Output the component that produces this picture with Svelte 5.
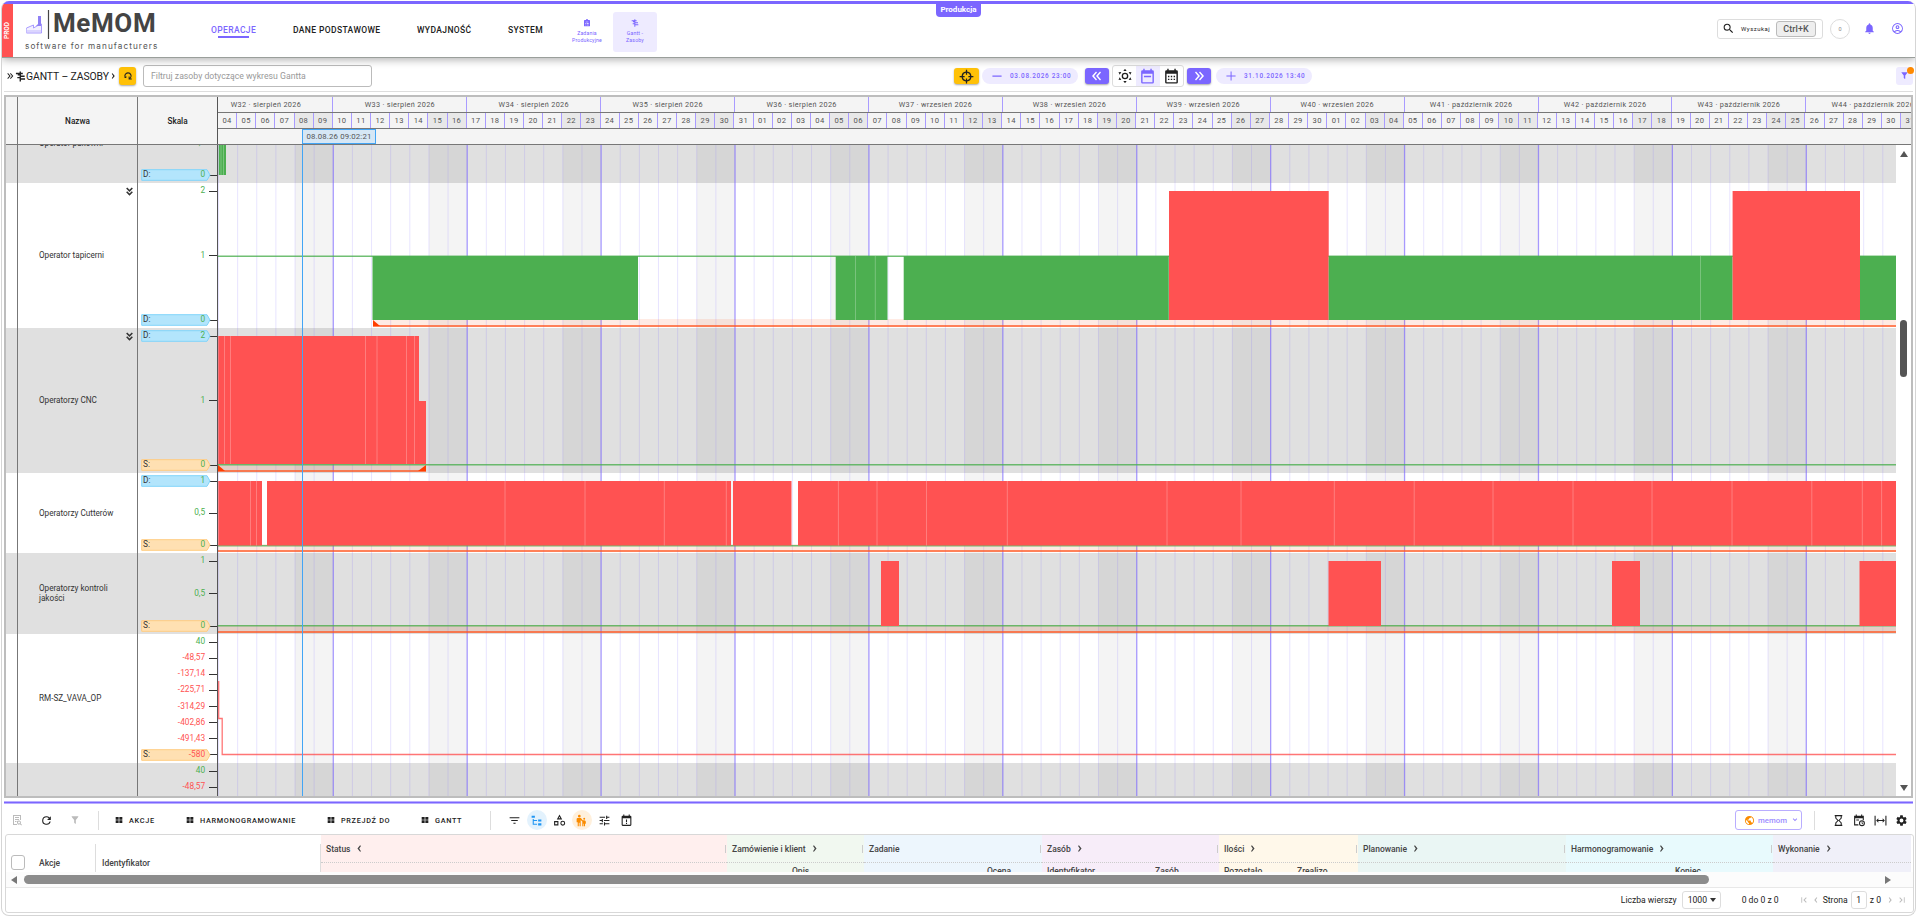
<script>
  const DAY = 19.13;
  const FIRST = 218.5;
  const LEFT = 218;
  const CHART_WIDTH = 1678;

  const icons = {
    search: 'M15.5 14h-.79l-.28-.27A6.471 6.471 0 0 0 16 9.5 6.5 6.5 0 1 0 9.5 16c1.61 0 3.09-.59 4.23-1.57l.27.28v.79l5 4.99L20.49 19l-4.99-5zm-6 0C7.01 14 5 11.99 5 9.5S7.01 5 9.5 5 14 7.01 14 9.5 11.99 14 9.5 14z',
    bell: 'M12 22c1.1 0 2-.9 2-2h-4c0 1.1.9 2 2 2zm6-6v-5c0-3.07-1.63-5.64-4.5-6.32V4c0-.83-.67-1.5-1.5-1.5s-1.5.67-1.5 1.5v.68C7.64 5.36 6 7.92 6 11v5l-2 2v1h16v-1l-2-2z',
    account: 'M12 2a10 10 0 1 0 0 20 10 10 0 0 0 0-20zM7.35 18.5a8 8 0 0 1 9.3 0 8 8 0 0 1-9.3 0zm10.79-1.38a10 10 0 0 0-12.28 0 8 8 0 1 1 12.28 0zM12 6a3.5 3.5 0 1 0 0 7 3.5 3.5 0 0 0 0-7zm0 5a1.5 1.5 0 1 1 0-3 1.5 1.5 0 0 1 0 3z',
    task: 'M19 3h-4a3 3 0 0 0-6 0H5a2 2 0 0 0-2 2v15a2 2 0 0 0 2 2h14a2 2 0 0 0 2-2V5a2 2 0 0 0-2-2zM8 8h8v2H8zM7 13h3v2H7zM12 13h5v2h-5zM7 17h3v2H7zM12 17h5v2h-5z',
    gantt: 'M10 1h3v3h4v3h-4v3h8v3h-8v3h9v3h-9v4h-3v-7H5v-3h5v-3H6V7H2V4h8z',
    target: 'M11 1h2v3.1A8 8 0 0 1 19.9 11H23v2h-3.1A8 8 0 0 1 13 19.9V23h-2v-3.1A8 8 0 0 1 4.1 13H1v-2h3.1A8 8 0 0 1 11 4.1zM13 6.1V9h-2V6.1A6 6 0 0 0 6.1 11H9v2H6.1a6 6 0 0 0 4.9 4.9V15h2v2.9a6 6 0 0 0 4.9-4.9H15v-2h2.9A6 6 0 0 0 13 6.1z',
    reset: 'M12 3a8.500 8.500 0 0 1 5.500 15H21v2.400h-7.500V13h2.400v3.500A6 6 0 1 0 6.200 13.500L8 12v5H2.500l1.700-1.700A8.500 8.500 0 0 1 12 3z',
    sun: 'M12 7a5 5 0 1 0 0 10 5 5 0 0 0 0-10zm0 2a3 3 0 1 1 0 6 3 3 0 0 1 0-6zM12 1l2.5 3.5h-5zM12 23l2.5-3.5h-5zM2.2 6.5l4.3-.4-2.4 4zM21.8 6.5l-4.3-.4 2.4 4zM2.2 17.5l4.3.4-2.4-4zM21.8 17.5l-4.3.4 2.4-4z',
    week: 'M6 1h2v2h8V1h2v2h1a2 2 0 0 1 2 2v15a2 2 0 0 1-2 2H5a2 2 0 0 1-2-2V5a2 2 0 0 1 2-2h1zM5 8v12h14V8zM7 11h10v2H7z',
    month: 'M6 1h2v2h8V1h2v2h1a2 2 0 0 1 2 2v15a2 2 0 0 1-2 2H5a2 2 0 0 1-2-2V5a2 2 0 0 1 2-2h1zM5 8v12h14V8zM7 11h2v2H7zM11 11h2v2h-2zM15 11h2v2h-2zM7 15h2v2H7zM11 15h2v2h-2zM15 15h2v2h-2z',
    filter: 'M14 12v7.88c.04.3-.06.62-.29.83a1 1 0 0 1-1.41 0l-2.01-2.01a.99.99 0 0 1-.29-.83V12L4.21 4.62a1 1 0 0 1 .17-1.4c.19-.14.4-.22.62-.22h14c.22 0 .43.08.62.22a1 1 0 0 1 .17 1.4L14 12z',
    preview: 'M4 2h14v2H6v16h6v2H4zM18 2h2v10h-2zM8 6h8v2H8zM8 10h8v2H8zM8 14h3v2H8zM16 13a4 4 0 1 0 1.9 7.5l2.6 2.5 1.4-1.4-2.5-2.6A4 4 0 0 0 16 13zm0 2a2 2 0 1 1 0 4 2 2 0 0 1 0-4z',
    refresh: 'M17.65 6.35A7.95 7.95 0 0 0 12 4a8 8 0 1 0 7.73 10h-2.08A6 6 0 1 1 12 6c1.66 0 3.14.69 4.22 1.78L13 11h7V4l-2.35 2.35z',
    grid: 'M2 3h9v8H2zM13 3h9v8h-9zM2 13h9v8H2zM13 13h9v8h-9z',
    lines: 'M10 18h4v-2h-4v2zM3 6v2h18V6H3zm3 7h12v-2H6v2z',
    tree: 'M3 3h6v4H3V3zm12 7h6v4h-6v-4zm0 7h6v4h-6v-4zm-2-4H7v5h6v2H5V9h2v2h6v2z',
    shapes: 'M12 1l5 9H7zM12 5l-1.6 3h3.2zM2 13h8v8H2zM4 15v4h4v-4zM18 12.5a4.5 4.5 0 1 0 0 9 4.5 4.5 0 0 0 0-9zm0 2a2.5 2.5 0 1 1 0 5 2.5 2.5 0 0 1 0-5z',
    people: 'M8 1.5a2.5 2.5 0 1 1 0 5 2.5 2.5 0 0 1 0-5zM5 7.5h6l3 4h3a3 3 0 0 1 3 3V18h-1.5v4.5h-2V18h-1v4.5h-2V14l-3-3v11.5H8.5V16H7v6.5H5V15H3V9.5a2 2 0 0 1 2-2zM17 7a1.8 1.8 0 1 1 0 3.6 1.8 1.8 0 0 1 0-3.6z',
    tune: 'M3 17v2h6v-2H3zM3 5v2h10V5H3zm10 16v-2h8v-2h-8v-2h-2v6h2zM7 9v2H3v2h4v2h2V9H7zm14 4v-2H11v2h10zm-6-4h2V7h4V5h-4V3h-2v6z',
    alert: 'M6 1h2v2h8V1h2v2h1a2 2 0 0 1 2 2v15a2 2 0 0 1-2 2H5a2 2 0 0 1-2-2V5a2 2 0 0 1 2-2h1zM5 8v12h14V8zM11 10h2v5h-2zM11 16.5h2v2h-2z',
    globe: 'M12 2a10 10 0 1 0 0 20 10 10 0 0 0 0-20zm-1 17.93A7.99 7.99 0 0 1 4 12c0-.62.08-1.21.21-1.79L9 15v1c0 1.1.9 2 2 2v1.93zm6.9-2.54A2 2 0 0 0 16 16h-1v-3c0-.55-.45-1-1-1H8v-2h2c.55 0 1-.45 1-1V7h2c1.1 0 2-.9 2-2v-.41a7.98 7.98 0 0 1 2.9 12.8z',
    hourglass: 'M5 2v2h1v4l4 4-4 4v4H5v2h14v-2h-1v-4l-4-4 4-4V4h1V2H5zm11 14.5V20H8v-3.5l4-4 4 4zm-4-5l-4-4V4h8v3.5l-4 4z',
    schedule: 'M5 1h2v2h8V1h2v2h3v8h-2V8H4v11h6v2H2V3h3zM6 10h5v2H6zM16.5 11.5a5.5 5.5 0 1 0 0 11 5.5 5.5 0 0 0 0-11zm0 2a3.5 3.5 0 1 1 0 7 3.5 3.5 0 0 1 0-7zM16 14h1.4v2.8l1.6 1-.7 1.2-2.3-1.5z',
    fit: 'M1 3h2v18H1zM21 3h2v18h-2zM8 8v3h8V8l4 4-4 4v-3H8v3l-4-4z',
    gear: 'M19.14 12.94c.04-.3.06-.61.06-.94 0-.32-.02-.64-.07-.94l2.03-1.58a.49.49 0 0 0 .12-.61l-1.92-3.32a.488.488 0 0 0-.59-.22l-2.39.96c-.5-.38-1.03-.7-1.62-.94l-.36-2.54a.484.484 0 0 0-.48-.41h-3.84c-.24 0-.43.17-.47.41l-.36 2.54c-.59.24-1.13.57-1.62.94l-2.39-.96c-.22-.08-.47 0-.59.22L2.74 8.87c-.12.21-.08.47.12.61l2.03 1.58c-.05.3-.09.63-.09.94s.02.64.07.94l-2.03 1.58a.49.49 0 0 0-.12.61l1.92 3.32c.12.22.37.29.59.22l2.39-.96c.5.38 1.03.7 1.62.94l.36 2.54c.05.24.24.41.48.41h3.84c.24 0 .44-.17.47-.41l.36-2.54c.59-.24 1.13-.56 1.62-.94l2.39.96c.22.08.47 0 .59-.22l1.92-3.32c.12-.22.07-.47-.12-.61l-2.01-1.58zM12 15.6a3.6 3.6 0 1 1 0-7.2 3.6 3.6 0 0 1 0 7.2z',
    right: 'M7 3l3-2 9 11-9 11-3-2 6-9z',
    left: 'M17 3l-3-2-9 11 9 11 3-2-6-9z',
    doubleRight: 'M4 5l2-2 8 9-8 9-2-2 6-7zM12 5l2-2 8 9-8 9-2-2 6-7z',
    doubleLeft: 'M20 5l-2-2-8 9 8 9 2-2-6-7zM12 5l-2-2-8 9 8 9 2-2-6-7z',
    doubleDown: 'M3 4l3-3 6 6 6-6 3 3-9 9zM3 14l3-3 6 6 6-6 3 3-9 9z',
    minus: 'M1 11h22v2.5H1z',
    plus: 'M1 11h10V1h2.4v10H23v2.4h-9.6V23H11v-9.6H1z',
    down: 'M3 8l3-3 6 6 6-6 3 3-9 9z',
    first: 'M4 4h2.5v16H4zM18 4l2 2-6 6 6 6-2 2-8-8z',
    last: 'M20 4h-2.5v16H20zM6 4L4 6l6 6-6 6 2 2 8-8z'
  };

  const menu = [
    { label: 'OPERACJE', width: 44, active: true },
    { label: 'DANE PODSTAWOWE', width: 86 },
    { label: 'WYDAJNOŚĆ', width: 53 },
    { label: 'SYSTEM', width: 34 }
  ];

  const days = Array.from({ length: 89 }, (_, i) => {
    const date = new Date(Date.UTC(2026, 7, 4 + i));
    return {
      label: String(date.getUTCDate()).padStart(2, '0'),
      x: FIRST - LEFT + i * DAY,
      weekend: date.getUTCDay() === 0 || date.getUTCDay() === 6,
      monday: date.getUTCDay() === 1
    };
  });

  const weeks = Array.from({ length: 13 }, (_, i) => ({
    name: `W${32 + i}`,
    month: i < 5 ? 'sierpień' : i < 9 ? 'wrzesień' : 'październik'
  }));

  // x values of bars are measured from the left edge of the page
  const rows = [
    {
      name: 'Operator pakowni', height: 80, dark: true,
      ticks: ['1', '0,5', '0'], tags: { 2: 'D' },
      bars: [{ x: 218.8, to: 226, y: 8, color: 'green' }],
      splits: [221, 223.5], base: 72
    },
    {
      name: 'Operator tapicerni', height: 145, expand: true,
      ticks: ['2', '1', '0'], tags: { 2: 'D' },
      bars: [
        { x: 372.5, to: 638, y: 73, color: 'green' },
        { x: 835.7, to: 887.5, y: 73, color: 'green' },
        { x: 903.7, to: 1168.8, y: 73, color: 'green' },
        { x: 1169, to: 1328.7, y: 8, color: 'red' },
        { x: 1328.7, to: 1732.6, y: 73, color: 'green' },
        { x: 1732.6, to: 1860, y: 8, color: 'red' },
        { x: 1860, to: 1896, y: 73, color: 'green' }
      ],
      splits: [855.5, 875.3, 1700.5], splitY: 73, base: 137,
      green: 72.5, band: [373, 1896], start: true
    },
    {
      name: 'Operatorzy CNC', height: 145, dark: true, expand: true,
      ticks: ['2', '1', '0'], tags: { 0: 'D', 2: 'S' },
      bars: [
        { x: 218.3, to: 419, y: 8, color: 'red' },
        { x: 418.8, to: 426, y: 73, color: 'red' }
      ],
      splits: [224.5, 230.5, 365.5, 377, 406.5, 414.5], base: 136,
      green: 136, band: [218, 426], start: true, end: true
    },
    {
      name: 'Operatorzy Cutterów', height: 80,
      ticks: ['1', '0,5', '0'], tags: { 0: 'D', 2: 'S' },
      bars: [
        { x: 218.3, to: 262, y: 8, color: 'red' },
        { x: 267, to: 731, y: 8, color: 'red' },
        { x: 733, to: 791.5, y: 8, color: 'red' },
        { x: 798, to: 1896, y: 8, color: 'red' }
      ],
      splits: [250.5, 256.5, 505, 585, 664.3, 726.3, 838.4, 877, 926.5, 1007.3, 1167, 1241, 1334.3, 1414.2, 1493, 1573, 1652, 1732, 1811.8, 1862.3, 1881.6],
      base: 72.5, green: 72, band: [218, 1896]
    },
    {
      name: 'Operatorzy kontroli jakości', height: 81, dark: true,
      ticks: ['1', '0,5', '0'], tags: { 2: 'S' },
      bars: [
        { x: 881, to: 899, y: 8, color: 'red' },
        { x: 1328.5, to: 1381, y: 8, color: 'red' },
        { x: 1612, to: 1640, y: 8, color: 'red' },
        { x: 1859.5, to: 1896, y: 8, color: 'red' }
      ],
      splits: [], base: 73, green: 72, band: [218, 1896]
    },
    {
      name: 'RM-SZ_VAVA_OP', height: 129,
      ticks: ['40', '-48,57', '-137,14', '-225,71', '-314,29', '-402,86', '-491,43', '-580'],
      tags: { 7: 'S' }, bars: [], splits: [], step: true
    },
    {
      name: '', height: 129, dark: true,
      ticks: ['40', '-48,57'],
      tags: {}, bars: [], splits: []
    }
  ];

  const actions = [
    { label: 'AKCJE', width: 71 },
    { label: 'HARMONOGRAMOWANIE', width: 141 },
    { label: 'PRZEJDŹ DO', width: 94 },
    { label: 'GANTT', width: 76 }
  ];

  const groups = [
    { label: 'Status', width: 406, color: 'rose', arrow: 'left', cols: [] },
    { label: 'Zamówienie i klient', width: 137, color: 'mint', arrow: 'right', cols: [{ label: 'Opis', pad: 65 }] },
    { label: 'Zadanie', width: 178, color: 'sky', cols: [{ label: 'Ocena', pad: 123 }] },
    { label: 'Zasób', width: 177, color: 'lilac', arrow: 'right', cols: [{ label: 'Identyfikator', pad: 5, width: 109 }, { label: 'Zasób', pad: 4 }] },
    { label: 'Ilości', width: 139, color: 'cream', arrow: 'right', cols: [{ label: 'Pozostało', pad: 5, width: 74 }, { label: 'Zrealizo', pad: 4 }] },
    { label: 'Planowanie', width: 208, color: 'sea', arrow: 'right', cols: [] },
    { label: 'Harmonogramowanie', width: 207, color: 'cyan', arrow: 'right', cols: [{ label: 'Koniec', pad: 109 }] },
    { label: 'Wykonanie', width: 138, color: 'violet', arrow: 'right', cols: [] }
  ];
</script>

{#snippet icon(name, size)}
  <svg class="icon" viewBox="0 0 24 24" width={size} height={size}>
    <path d={icons[name]} fill="currentColor" fill-rule="evenodd" />
  </svg>
{/snippet}

<div class="app">
  <header>
    <div class="env">PROD</div>
    <div class="logo">
      <div class="logo-top">
        <svg width="26" height="38" viewBox="0 0 26 38">
          <path d="M1.500 26V21l7-3v3l7-4h1v9z" fill="#f3f0ff" stroke="#a99bff" stroke-width="1" />
          <path d="M11 19l2-2V9h3v10z" fill="#8f80f5" />
          <path d="M1.500 26v-4.500M1.500 24h15" stroke="#c3baff" />
          <path d="M23.500 3v29" stroke="#444" stroke-width="1.200" />
        </svg>
        <span>MeMOM</span>
      </div>
      <div class="slogan">software for manufacturers</div>
    </div>
    <nav>
      {#each menu as item}
        <a class:active={item.active} style="width: {item.width}px">{item.label}</a>
      {/each}
    </nav>
    <div class="shortcuts">
      <div class="shortcut">{@render icon('task', 8)}<span>Zadania<br />Produkcyjne</span></div>
      <div class="shortcut selected">{@render icon('gantt', 8)}<span>Gantt -<br />Zasoby</span></div>
    </div>
    <div class="user-bar">
      <div class="search">
        {@render icon('search', 13)}
        <span>Wyszukaj</span>
        <kbd>Ctrl+K</kbd>
      </div>
      <div class="counter">0</div>
      {@render icon('bell', 13)}
      {@render icon('account', 13)}
    </div>
    <div class="mode">Produkcja</div>
  </header>

  <section class="toolbar">
    <div class="crumbs">
      {@render icon('doubleRight', 8)}
      {@render icon('gantt', 11)}
      <span class="title">GANTT – ZASOBY</span>
      {@render icon('right', 6)}
      <button class="reset">{@render icon('reset', 10)}</button>
      <input placeholder="Filtruj zasoby dotyczące wykresu Gantta" />
    </div>
    <div class="range">
      <button class="target">{@render icon('target', 15)}</button>
      <span class="pill">{@render icon('minus', 10)}<b>03.08.2026 23:00</b></span>
      <button class="move">{@render icon('doubleLeft', 12)}</button>
      <div class="switch">
        <span>{@render icon('sun', 16)}</span>
        <span class="on">{@render icon('week', 17)}</span>
        <span>{@render icon('month', 17)}</span>
      </div>
      <button class="move">{@render icon('doubleRight', 12)}</button>
      <span class="pill last">{@render icon('plus', 10)}<b>31.10.2026 13:40</b></span>
    </div>
    <div class="filter">{@render icon('filter', 9)}<i></i></div>
  </section>

  <section class="gantt">
    <div class="gantt-head">
      <div class="head-gap"></div>
      <div class="head-name">Nazwa</div>
      <div class="head-scale">Skala</div>
      <div class="head-time">
        <div class="weeks">
          {#each weeks as week}
            <span>{week.name} · {week.month} 2026</span>
          {/each}
        </div>
        <div class="days">
          {#each days as day}
            <span class:weekend={day.weekend}>{day.label}</span>
          {/each}
        </div>
        <div class="marker"><span>08.08.26 09:02:21</span></div>
      </div>
    </div>

    <div class="gantt-body">
      <div class="rows">
        {#each rows as row}
          <div class="row" class:dark={row.dark} style="height: {row.height}px">
            <div class="cell-gap"></div>
            <div class="cell-name">
              <span>{row.name}</span>
              {#if row.expand}<i>{@render icon('doubleDown', 9)}</i>{/if}
            </div>
            <div class="cell-scale" class:partial={row.ticks.length === 2}>
              {#each row.ticks as tick, i}
                <div class="tick" class:negative={tick.startsWith('-')}>
                  <div class="tag {row.tags[i] ?? ''}">
                    {#if row.tags[i]}
                      <svg width="70" height="12" viewBox="0 0 70 12">
                        <path d="M.7 .7H66L69 6l-3 5.300H.7z" />
                      </svg>
                    {/if}
                    <b>{row.tags[i] ? `${row.tags[i]}:` : ''}</b>
                    <span>{tick}</span>
                  </div>
                  <em></em>
                </div>
              {/each}
            </div>
            <svg class="chart" width={CHART_WIDTH} height={row.height} viewBox="{LEFT} 0 {CHART_WIDTH} {row.height}">
              {#each days as day}
                {#if day.weekend}
                  <rect x={day.x + LEFT} y="0" width={DAY} height={row.height} fill="#000" opacity="0.045" />
                {/if}
              {/each}
              {#each days as day}
                <line x1={day.x + LEFT} x2={day.x + LEFT} y1="0" y2={row.height} class={day.monday ? 'week-line' : 'day-line'} />
              {/each}
              {#if row.band}
                <rect x={row.band[0]} y={row.height - 9} width={row.band[1] - row.band[0]} height="6" fill="#ff5722" opacity="0.12" />
                <rect x={row.band[0]} y={row.height - 3} width={row.band[1] - row.band[0]} height="2" fill="#ff5722" opacity="0.75" />
              {/if}
              {#if row.green}
                <rect x={LEFT} y={row.green} width={CHART_WIDTH} height="1.500" fill="#4caf50" opacity="0.800" />
              {/if}
              {#each row.bars as bar}
                <rect x={bar.x} y={bar.y} width={bar.to - bar.x} height={row.base - bar.y} class={bar.color} />
              {/each}
              {#each row.splits as x}
                <line x1={x} x2={x} y1={row.splitY ?? 8} y2={row.base} stroke="#fff" stroke-width="1" opacity="0.250" />
              {/each}
              {#if row.start}
                <path d="M{row.band[0]} {row.height - 8}v6h7z" fill="#ff3d00" />
              {/if}
              {#if row.end}
                <path d="M{row.band[1]} {row.height - 8}v6h-8z" fill="#ff3d00" />
              {/if}
              {#if row.step}
                <path d="M218.700 47V84.500H222.200V120.500H1896" fill="none" stroke="#ff5252" stroke-width="1.300" opacity="0.800" />
              {/if}
            </svg>
          </div>
        {/each}
      </div>
      <div class="scroll-y">
        <svg width="8" height="6"><path d="M0 6L4 0l4 6z" fill="#555" /></svg>
        <i></i>
        <svg width="8" height="6"><path d="M0 0L4 6l4-6z" fill="#555" /></svg>
      </div>
      <div class="now"></div>
    </div>
  </section>

  <div class="splitter"></div>

  <section class="table-tools">
    <span class="tool off">{@render icon('preview', 12)}</span>
    <span class="tool">{@render icon('refresh', 13)}</span>
    <span class="tool off">{@render icon('filter', 10)}</span>
    <span class="divider"></span>
    <div class="actions">
      {#each actions as action}
        <span class="action" style="width: {action.width}px">{@render icon('grid', 8)}{action.label}</span>
      {/each}
    </div>
    <span class="divider"></span>
    <div class="views">
      <span>{@render icon('lines', 13)}</span>
      <span class="blue">{@render icon('tree', 13)}</span>
      <span>{@render icon('shapes', 13)}</span>
      <span class="orange">{@render icon('people', 13)}</span>
      <span>{@render icon('tune', 13)}</span>
      <span>{@render icon('alert', 13)}</span>
    </div>
    <div class="tenant">{@render icon('globe', 11)}<span>memom</span>{@render icon('down', 6)}</div>
    <span class="divider"></span>
    <div class="options">
      {@render icon('hourglass', 13)}
      {@render icon('schedule', 13)}
      {@render icon('fit', 13)}
      {@render icon('gear', 13)}
    </div>
  </section>

  <section class="table">
    <div class="table-head">
      <div class="pinned">
        <i class="checkbox"></i>
        <span class="akcje">Akcje</span>
        <span class="ident">Identyfikator</span>
      </div>
      {#each groups as group}
        <div class="group {group.color}" style="width: {group.width}px">
          <div class="group-title">
            {group.label}
            {#if group.arrow}{@render icon(group.arrow, 7)}{/if}
          </div>
          <div class="subs">
            {#each group.cols as col}
              <span style="padding-left: {col.pad}px; width: {col.width ? col.width + 'px' : 'auto'}">{col.label}</span>
            {/each}
          </div>
        </div>
      {/each}
    </div>
    <div class="scroll-x">
      <svg width="6" height="8"><path d="M6 0L0 4l6 4z" fill="#777" /></svg>
      <i></i>
      <svg width="6" height="8"><path d="M0 0l6 4-6 4z" fill="#777" /></svg>
    </div>
    <footer>
      <span>Liczba wierszy</span>
      <span class="select">1000 <svg width="6" height="4"><path d="M0 0h6L3 4z" fill="#333" /></svg></span>
      <span class="total">0 do 0 z 0</span>
      <span class="pager">{@render icon('first', 8)}{@render icon('left', 6)}</span>
      <span>Strona</span>
      <span class="page">1</span>
      <span>z 0</span>
      <span class="pager next">{@render icon('right', 6)}{@render icon('last', 8)}</span>
    </footer>
  </section>
</div>

<style>
  :global(body) {
    margin: 0;
    background: #fff;
    font-family: Roboto, "Liberation Sans", sans-serif;
    color: #212121;
    overflow: hidden;
  }

  * {
    box-sizing: border-box;
  }

  .icon {
    display: block;
    flex: none;
  }

  button {
    border: 0;
    padding: 0;
    display: flex;
    flex: none;
    align-items: center;
    justify-content: center;
    border-radius: 3px;
    box-shadow: 0 1px 2px rgba(0, 0, 0, 0.35);
    color: #222;
  }

  .app {
    width: 1915px;
    height: 915px;
    margin: 1px 0 0 1px;
    border: 1px solid #d5d5d5;
    border-top: 0;
    border-radius: 8px;
    display: flex;
    flex-direction: column;
    overflow: hidden;
  }

  header {
    position: relative;
    z-index: 2;
    height: 57px;
    flex: none;
    border-top: 3px solid #7b66ff;
    border-bottom: 1px solid #9a9f9b;
    box-shadow: 0 2px 8px rgba(0, 0, 0, 0.3);
    background: #fff;
    display: flex;
    align-items: center;
  }

  .env {
    width: 11px;
    height: 53px;
    flex: none;
    background: #ff5252;
    color: #fff;
    font-size: 6.5px;
    font-weight: 700;
    writing-mode: vertical-rl;
    transform: rotate(180deg);
    text-align: center;
    line-height: 11px;
  }

  .logo {
    width: 198px;
    padding: 0 0 0 12px;
    flex: none;
    height: 53px;
  }

  .logo-top {
    display: flex;
    height: 37px;
    margin-top: 3px;
  }

  .logo-top svg {
    flex: none;
  }

  .logo-top span {
    font-size: 26px;
    line-height: 33px;
    font-weight: 700;
    letter-spacing: 0.6px;
    color: #444;
    margin-left: 2px;
  }

  .slogan {
    font-family: Inter, sans-serif;
    font-size: 8.2px;
    line-height: 9px;
    margin-top: -2px;
    letter-spacing: 1.07px;
    white-space: nowrap;
    color: #555;
  }

  nav {
    display: flex;
    gap: 38px;
    flex: none;
    padding-top: 3px;
  }

  nav a {
    font-size: 8.5px;
    line-height: 12px;
    font-weight: 500;
    letter-spacing: 0.38px;
    white-space: nowrap;
    height: 17px;
    text-align: center;
  }

  nav a.active {
    color: #7b66ff;
  }

  nav a.active::after {
    content: '';
    display: block;
    width: 31px;
    height: 2px;
    margin: 0 auto;
    background: #7b66ff;
  }

  .shortcuts {
    display: flex;
    margin-left: 23px;
    gap: 4px;
    padding-top: 2px;
  }

  .shortcut {
    width: 44px;
    height: 40px;
    border-radius: 3px;
    display: flex;
    flex-direction: column;
    align-items: center;
    padding-top: 7px;
    gap: 3px;
    color: #7b66ff;
    font-size: 5.2px;
    line-height: 7px;
    letter-spacing: 0.15px;
    text-align: center;
  }

  .selected {
    background: #eeebff;
  }

  .user-bar {
    margin-left: auto;
    padding-right: 11px;
    display: flex;
    align-items: center;
    color: #7b66ff;
    gap: 15px;
    margin-top: -4px;
  }

  .search {
    width: 106px;
    height: 20px;
    border: 1px solid #ddd;
    border-radius: 3px;
    display: flex;
    flex: none;
    align-items: center;
    padding-left: 4px;
    color: #222;
    font-size: 6px;
    letter-spacing: 0.5px;
    margin-right: -8px;
  }

  .search span {
    width: 41px;
    flex: none;
    padding-left: 6px;
  }

  kbd {
    font: 500 9px Roboto, sans-serif;
    letter-spacing: 0.1px;
    width: 40px;
    height: 16px;
    flex: none;
    line-height: 14px;
    text-align: center;
    border: 1px solid #bbb;
    border-radius: 3px;
    background: #eee;
    color: #555;
  }

  .counter {
    width: 20px;
    height: 20px;
    border: 1px solid #ddd;
    border-radius: 50%;
    font-size: 5.5px;
    line-height: 18px;
    text-align: center;
    color: #888;
    margin-right: -2px;
  }

  .mode {
    position: absolute;
    left: 934px;
    top: 0;
    width: 45px;
    height: 13px;
    background: #7b66ff;
    color: #fff;
    border-radius: 0 0 4px 4px;
    font-size: 8px;
    line-height: 11px;
    font-weight: 700;
    text-align: center;
  }

  .toolbar {
    height: 34px;
    flex: none;
    margin: 0 2px;
    border-bottom: 1px solid #ddd;
    display: flex;
    align-items: center;
    justify-content: space-between;
    padding-top: 3px;
  }

  .crumbs {
    width: 950px;
    display: flex;
    align-items: center;
    padding-left: 2px;
  }

  .crumbs .title {
    font-size: 10.4px;
    width: 80px;
    margin: 0 4px 0 0;
    white-space: nowrap;
    letter-spacing: -0.1px;
  }

  .crumbs .icon + .icon {
    margin-left: 1px;
  }

  .reset {
    width: 17px;
    height: 18px;
    margin: 0 7px 0 3px;
    background: #ffc107;
  }

  .crumbs input {
    width: 229px;
    height: 22px;
    border: 1px solid #bbb;
    border-radius: 3px;
    padding: 0 7px;
    font: 8.7px Roboto, sans-serif;
  }

  .crumbs input::placeholder {
    color: #999;
  }

  .range {
    flex: 1;
    display: flex;
    align-items: center;
  }

  .target {
    width: 25px;
    height: 16px;
    background: #ffc107;
    margin-right: 3px;
  }

  .pill {
    width: 96px;
    height: 16px;
    border-radius: 8px;
    background: #eeebff;
    color: #7b66ff;
    display: flex;
    align-items: center;
    padding-left: 10px;
    margin-right: 7px;
  }

  .pill b {
    font-size: 6.4px;
    font-weight: 500;
    letter-spacing: 0.68px;
    padding-left: 8px;
    white-space: nowrap;
  }

  .pill.last {
    margin-left: 5px;
  }

  .move {
    width: 24px;
    height: 16px;
    background: #7b66ff;
    color: #fff;
  }

  .switch {
    display: flex;
    width: 72px;
    height: 22px;
    margin: 0 3px;
    border: 1px solid #ddd;
    border-radius: 3px;
  }

  .switch span {
    width: 24px;
    display: flex;
    align-items: center;
    justify-content: center;
  }

  .switch .on {
    background: #eeebff;
    color: #7b66ff;
  }

  .filter {
    position: relative;
    width: 17px;
    height: 18px;
    border-radius: 3px;
    background: #eeebff;
    color: #7b66ff;
    padding: 4px 4px;
  }

  .filter i {
    position: absolute;
    right: -1px;
    top: 0;
    width: 7px;
    height: 7px;
    border-radius: 50%;
    background: #ff8a00;
  }

  .gantt {
    width: 1909px;
    height: 703px;
    flex: none;
    margin: 3px 0 0 2px;
    border: 2px solid #bdbdbd;
    font-size: 8.3px;
  }

  .gantt-head {
    height: 48px;
    display: flex;
    background: #f4f4f4;
    border-bottom: 1px solid #777;
    overflow: hidden;
  }

  .head-gap,
  .cell-gap {
    width: 12px;
    flex: none;
    border-right: 1px solid #777;
  }

  .head-name,
  .cell-name {
    width: 120px;
    flex: none;
    border-right: 1px solid #777;
  }

  .head-scale,
  .cell-scale {
    width: 80px;
    flex: none;
    border-right: 1px solid #555;
  }

  .head-name,
  .head-scale {
    text-align: center;
    line-height: 48px;
    font-weight: 500;
    font-size: 8.2px;
  }

  .head-time {
    flex: 1;
    overflow: hidden;
    color: #555;
  }

  .weeks,
  .days {
    display: flex;
    border-bottom: 1px solid #777;
    height: 16px;
  }

  .weeks {
    margin-left: -18.5px;
  }

  .weeks span {
    width: 133.91px;
    flex: none;
    border-right: 1px solid #a99bff;
    line-height: 15px;
    text-align: center;
    font-size: 7.3px;
    letter-spacing: 0.33px;
    white-space: nowrap;
  }

  .days span {
    width: 19.13px;
    flex: none;
    border-right: 1px solid #a99bff;
    line-height: 15px;
    text-align: center;
    font-size: 7.6px;
    letter-spacing: 0.4px;
  }

  .days .weekend {
    background: #e8e8e8;
  }

  .marker {
    padding-left: 84px;
  }

  .marker span {
    display: block;
    width: 74px;
    height: 15px;
    border: 1px solid #42a5f5;
    background: #d6e7f5;
    font-size: 7.8px;
    letter-spacing: 0.15px;
    line-height: 13px;
    text-align: center;
    white-space: nowrap;
  }

  .gantt-body {
    position: relative;
    height: 651px;
    overflow: hidden;
    display: flex;
  }

  .rows {
    margin-top: -42px;
    width: 1890px;
    flex: none;
  }

  .row {
    display: flex;
  }

  .row.dark {
    background: #e0e0e0;
  }

  .cell-name {
    display: flex;
    align-items: center;
    padding-left: 21px;
    padding-bottom: 1px;
    line-height: 10px;
    color: #333;
    position: relative;
    font-size: 8.2px;
    letter-spacing: -0.02px;
  }

  .cell-name span {
    width: 80px;
  }

  .cell-name i {
    position: absolute;
    right: 3px;
    top: 4px;
  }

  .cell-scale {
    display: flex;
    flex-direction: column;
    justify-content: space-between;
    padding: 2px 0 2px 3px;
    color: #4caf50;
  }

  .cell-scale.partial {
    justify-content: flex-start;
    gap: 4px;
  }

  .tick {
    display: flex;
    align-items: center;
    height: 12px;
  }

  .negative {
    color: #ff5252;
  }

  .tag {
    position: relative;
    width: 69px;
    height: 12px;
    display: flex;
    justify-content: space-between;
    align-items: center;
    padding: 0 4px 2px 2px;
  }

  .tag svg {
    position: absolute;
    left: 0;
    top: 0;
    overflow: visible;
  }

  .tag.D path {
    fill: #b3e5fc;
    stroke: #81d4fa;
  }

  .tag.S path {
    fill: #ffe0b2;
    stroke: #ffcc80;
  }

  .tag b,
  .tag span {
    position: relative;
    font-weight: 400;
    line-height: 10px;
  }

  .tag b {
    color: #333;
  }

  .tick em {
    width: 8px;
    height: 1px;
    background: #333;
  }

  .chart {
    display: block;
    flex: none;
  }

  .day-line {
    stroke: #7b66ff;
    stroke-width: 1;
    opacity: 0.17;
  }

  .week-line {
    stroke: #7b66ff;
    stroke-width: 1.3;
    opacity: 0.65;
  }

  .green {
    fill: #4caf50;
  }

  .red {
    fill: #ff5252;
  }

  .scroll-y {
    width: 15px;
    display: flex;
    flex-direction: column;
    align-items: center;
    padding: 6px 0 5px;
  }

  .scroll-y i {
    width: 7px;
    height: 57px;
    margin: 163px 0 auto;
    border-radius: 4px;
    background: #555;
  }

  .now {
    position: absolute;
    left: 296px;
    top: 0;
    bottom: 0;
    width: 1px;
    background: #42a5f5;
  }

  .splitter {
    height: 3px;
    flex: none;
    margin: 3px 2px 0;
    background: #7b66ff;
    border: solid #b9adff;
    border-width: 1px 0;
  }

  .table-tools {
    height: 30px;
    flex: none;
    display: flex;
    align-items: center;
    padding: 2px 7px 0 2px;
  }

  .tool {
    display: flex;
    justify-content: center;
  }

  .tool:nth-child(1) {
    width: 25px;
  }

  .tool:nth-child(2) {
    width: 35px;
  }

  .tool:nth-child(3) {
    width: 22px;
  }

  .off {
    color: #bbb;
  }

  .divider {
    width: 1px;
    height: 19px;
    background: #ddd;
    margin-left: 12px;
  }

  .actions {
    display: flex;
    padding-left: 16px;
    width: 379px;
  }

  .action {
    display: flex;
    align-items: center;
    flex: none;
    gap: 6px;
    font-size: 7.3px;
    font-weight: 500;
    letter-spacing: 0.68px;
    white-space: nowrap;
  }

  .views {
    display: flex;
    padding-left: 13px;
    gap: 2.6px;
  }

  .views span {
    width: 20px;
    height: 20px;
    border-radius: 50%;
    display: flex;
    align-items: center;
    justify-content: center;
  }

  .blue {
    color: #2196f3;
    background: #e3f2fd;
  }

  .orange {
    color: #fb8c00;
    background: #fff0dc;
  }

  .tenant {
    margin-left: auto;
    width: 67px;
    height: 20px;
    border: 1px solid #b9adff;
    border-radius: 3px;
    display: flex;
    align-items: center;
    gap: 3px;
    padding-left: 8px;
    font-size: 7.8px;
    font-weight: 500;
    color: #9c8cff;
  }

  .tenant .icon:first-child {
    color: #fb8c00;
  }

  .tenant span {
    width: 31px;
  }

  .options {
    display: flex;
    align-items: center;
    gap: 8px;
    padding-left: 17px;
  }

  .table {
    width: 1909px;
    height: 79px;
    flex: none;
    margin-left: 3px;
    border: 1px solid #d8d8d8;
    border-radius: 3px;
    font-size: 8.5px;
    font-weight: 500;
    color: #444;
    overflow: hidden;
  }

  .table-head {
    display: flex;
    height: 37px;
    overflow: hidden;
  }

  .pinned {
    width: 315px;
    flex: none;
    display: flex;
    align-items: flex-end;
    padding-left: 5px;
  }

  .checkbox {
    width: 14px;
    height: 15px;
    border: 1px solid #bbb;
    border-radius: 3px;
    margin-bottom: 2px;
  }

  .akcje,
  .ident {
    height: 28px;
    line-height: 39px;
  }

  .akcje {
    width: 71px;
    padding-left: 14px;
    border-right: 1px solid #ddd;
  }

  .ident {
    padding-left: 6px;
    flex: 1;
    border-right: 1px solid #ddd;
  }

  .group {
    flex: none;
  }

  .group-title {
    height: 28px;
    padding-left: 5px;
    display: flex;
    align-items: center;
    gap: 5px;
    border-bottom: 1px dotted #ccc;
    white-space: nowrap;
  }

  .subs {
    display: flex;
    white-space: nowrap;
    line-height: 10px;
    padding-top: 3px;
  }

  .group:not(:last-child) .group-title::after {
    content: '';
    width: 1px;
    height: 8px;
    margin-left: auto;
    margin-right: 1px;
    background: #ccc;
  }

  .rose { background: #ffefee; }
  .mint { background: #f1f8f0; }
  .sky { background: #edf6fd; }
  .lilac { background: #f7edf9; }
  .cream { background: #fff8ea; }
  .sea { background: #eaf6f4; }
  .cyan { background: #e8fafd; }
  .violet { background: #f0f0f9; }

  .scroll-x {
    height: 16px;
    display: flex;
    align-items: center;
    background: #fcfcfc;
    border-bottom: 1px solid #e8e8e8;
    padding: 0 22px 0 5px;
    justify-content: space-between;
  }

  .scroll-x i {
    width: 1685px;
    height: 9px;
    border-radius: 5px;
    margin: 0 auto 0 7px;
    background: #8c8c8c;
  }

  footer {
    height: 23px;
    display: flex;
    align-items: center;
    justify-content: flex-end;
    padding-right: 7px;
    font-weight: 400;
    font-size: 8.6px;
    white-space: nowrap;
    color: #222;
  }

  .select {
    width: 39px;
    height: 18px;
    border: 1px solid #ddd;
    border-radius: 3px;
    margin: 0 21px 0 5px;
    padding-left: 5px;
    display: flex;
    align-items: center;
    gap: 3px;
  }

  .total {
    margin-right: 21px;
  }

  .pager {
    display: flex;
    align-items: center;
    gap: 5px;
    color: #bbb;
    margin-right: 4px;
  }

  .pager.next {
    margin: 0 0 0 6px;
  }

  .page {
    width: 16px;
    height: 18px;
    border: 1px solid #ddd;
    border-radius: 3px;
    text-align: center;
    line-height: 16px;
    margin: 0 3px;
  }
</style>
